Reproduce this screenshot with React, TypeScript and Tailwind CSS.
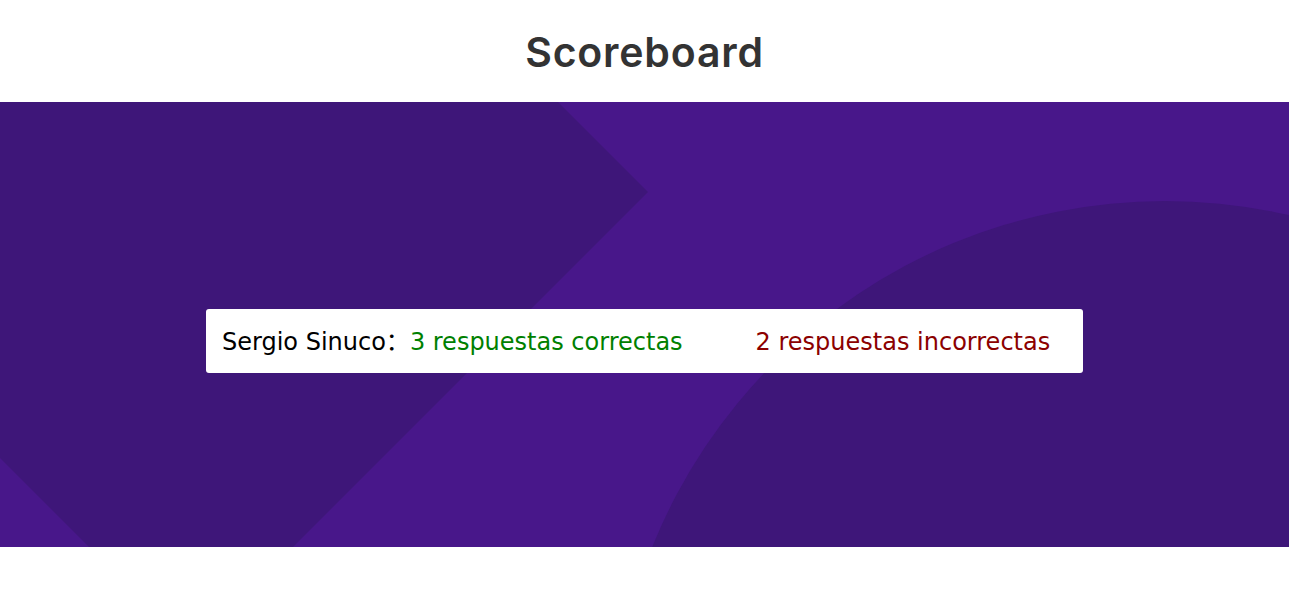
import React from "react";

const Backdrop: React.FC = () => (
    <svg
        className="absolute inset-0 h-full w-full"
        viewBox="0 0 1289 445"
        preserveAspectRatio="none"
        aria-hidden="true"
    >
        <polygon points="648,90 191,547 -266,90 191,-367" fill="#3e1679" />
        <circle cx="1165" cy="652" r="553" fill="#3e1679" />
    </svg>
);

export default function App() {
    return (
        <div className="min-h-screen bg-white">
            {/* --- HEADER --- */}
            <header className="h-[102px] flex items-center justify-center">
                <h1 className="text-[41px] font-semibold text-[#333333] tracking-[0.8px] font-['Inter',sans-serif] leading-none mt-[2px]">
                    Scoreboard
                </h1>
            </header>

            {/* --- SCORE BAND --- */}
            <section className="relative h-[445px] overflow-hidden bg-[#48178a] flex items-center justify-center pt-[33px]">
                <Backdrop />
                <div className="relative w-[877px] h-[64px] bg-white rounded-[3px] flex items-center pl-4 pt-[2px] text-2xl font-['DejaVu_Sans','Noto_Sans_CJK_SC',sans-serif]">
                    <span className="text-black">Sergio Sinuco：</span>
                    <span className="text-[#008000]">3 respuestas correctas</span>
                    <span className="ml-[73px] text-[#8b0000]">2 respuestas incorrectas</span>
                </div>
            </section>
        </div>
    );
}
